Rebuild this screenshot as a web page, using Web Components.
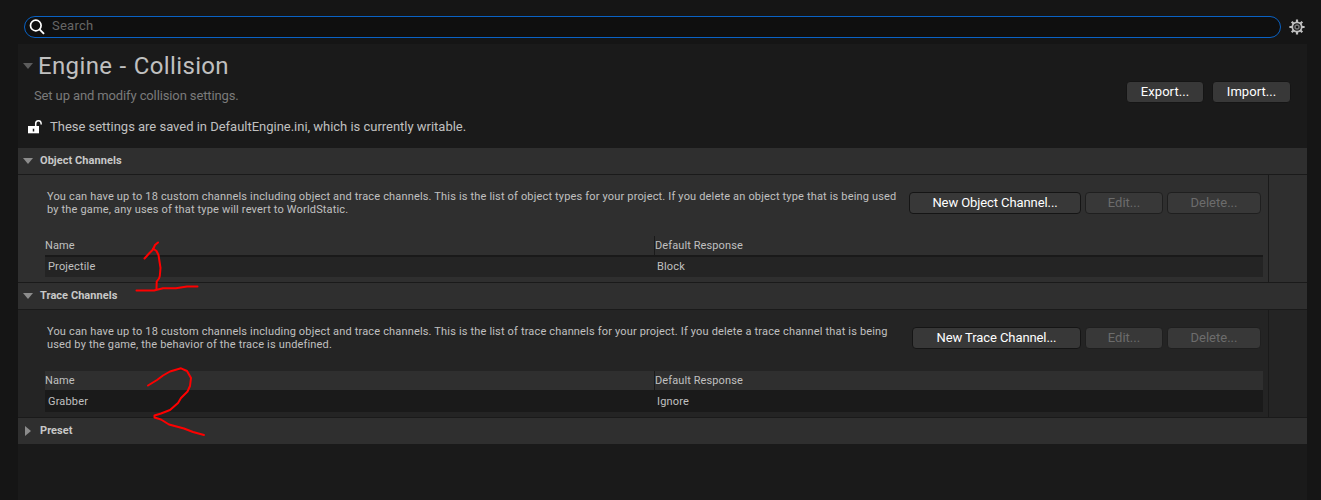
<!DOCTYPE html>
<html lang="en">
<head>
<meta charset="utf-8">
<title>Engine - Collision</title>
<style>
html, body { margin: 0; height: 100%; background: #151515; overflow: hidden; }
body { font-family: Roboto, "Liberation Sans", sans-serif; color: #c0c0c0; }
</style>
</head>
<body>
<settings-page></settings-page>
<script>
const define = (name, html) => {
  const t = document.createElement('template');
  t.innerHTML = html;
  customElements.define(name, class extends HTMLElement {
    constructor() {
      super();
      this.attachShadow({ mode: 'open' }).append(t.content.cloneNode(true));
    }
  });
};

define('search-bar', `
<style>
:host { display: flex; align-items: center; height: 44px; padding: 0 16px 0 24px; box-sizing: border-box; }
.field { flex: 1; height: 22px; margin-top: 10px; margin-right: 8px; box-sizing: border-box; border: 1px solid #0a62c4; border-radius: 11px; background: #0f0f0f; display: flex; align-items: center; }
.field svg { margin-left: 4px; flex: none; }
.field span { font-size: 13px; line-height: 16px; color: #666; margin: -3px 0 0 7px; letter-spacing: .25px; }
.gear { margin-top: 10px; flex: none; }
</style>
<div class="field">
<svg width="16" height="16" viewBox="0 0 16 16" fill="none" stroke="#fff"><circle cx="6.8" cy="6.5" r="5.3" stroke-width="1.7"/><path d="M10.6 10.4L15 14.8" stroke-width="1.9"/></svg>
<span>Search</span>
</div>
<svg class="gear" width="16" height="16" viewBox="0 0 16 16" fill="none" stroke="#c0c0c0">
<circle cx="8" cy="8" r="4.7" stroke-width="1.8"/>
<circle cx="8" cy="8" r="2" stroke-width="1.5" stroke="#777"/>
<path stroke-width="2.2" d="M8 .4V3M8 13v2.6M.4 8H3M13 8h2.6M2.7 2.7l1.8 1.8M11.5 11.5l1.8 1.8M13.3 2.7l-1.8 1.8M4.5 11.5l-1.8 1.8"/></svg>`);

define('ui-button', `
<style>
:host { display: flex; box-sizing: border-box; height: 22px; border: 1px solid #151515; border-radius: 4px; background: #383838; color: #fff; align-items: center; justify-content: center; font-size: 13px; line-height: 16px; white-space: nowrap; letter-spacing: var(--ls, 0px); }
:host([disabled]) { color: #6c6c6c; border-color: #1f1f1f; }
span { margin-top: -1px; }
</style><span><slot></slot></span>`);

define('expand-arrow', `
<style>:host { display: block; width: 10px; height: 10px; } svg { display: block; } :host([closed]) svg { transform: rotate(-90deg); }</style>
<svg width="10" height="10" viewBox="0 0 10 10"><path d="M0 2H10L5 8Z" fill="var(--arrow, #8c8c8c)"/></svg>`);

define('page-header', `
<style>
:host { display: flex; height: 104px; box-sizing: border-box; padding: 0 16px 0 5px; justify-content: space-between; }
.title { display: flex; align-items: center; gap: 5px; height: 44px; --arrow: #5c5c5c; }
h1 { margin: 0; font: 400 24px/30px Roboto, sans-serif; letter-spacing: .36px; word-spacing: .9px; color: #c0c0c0; }
.desc { font-size: 13px; line-height: 16px; color: #7a7a7a; margin-left: 11px; letter-spacing: -.12px; }
.note { display: flex; align-items: center; margin: 14px 0 0 5px; gap: 8px; font-size: 13px; line-height: 18px; letter-spacing: -.018px; }
.buttons { display: flex; gap: 8px; padding-top: 37px; --ls: .05px; }
.buttons ui-button { width: 78px; }
.buttons ui-button:last-child { width: 79px; }
</style>
<div>
<div class="title"><expand-arrow></expand-arrow><h1>Engine - Collision</h1></div>
<div class="desc">Set up and modify collision settings.</div>
<div class="note"><svg width="14" height="14" viewBox="0 0 14 14"><path d="M0 6H11V13.3H0Z" fill="#fff"/><path d="M7.7 6V3.7Q7.7 .8 10.5 .8Q13.2 .8 13.2 4.4" fill="none" stroke="#fff" stroke-width="1.5"/><path d="M5.5 8.7v2.8" stroke="#1a1a1a" stroke-width="1.5"/></svg><span>These settings are saved in DefaultEngine.ini, which is currently writable.</span></div>
</div>
<div class="buttons"><ui-button>Export...</ui-button><ui-button>Import...</ui-button></div>`);

define('section-header', `
<style>
:host { display: flex; align-items: center; height: 26px; padding-left: 5px; gap: 7px; background: #2f2f2f; font-weight: 700; font-size: 11px; line-height: 14px; letter-spacing: .05px; color: #c8c8c8; }
</style><expand-arrow></expand-arrow><span><slot></slot></span>`);
class SectionHeader extends customElements.get('section-header') {
  connectedCallback() {
    if (this.hasAttribute('closed')) this.shadowRoot.querySelector('expand-arrow').setAttribute('closed', '');
  }
}
customElements.define('section-header-toggle', SectionHeader);

define('channel-section', `
<style>
:host { display: grid; grid-template-columns: 1250px 38px; gap: 1px; height: 107px; border-top: 1px solid #1a1a1a; border-bottom: 1px solid #1a1a1a; background: #1a1a1a; }
.main, .side { background: var(--body, #242424); }
.main { padding: 17px 5px 0 27px; box-sizing: border-box; }
.top { display: flex; height: 44px; justify-content: space-between; padding: 0 2px 0 2px; }
.text { font-size: 11px; line-height: 13px; letter-spacing: .168px; white-space: nowrap; margin-top: -2px; }
.actions { display: flex; gap: 4px; }
.edit { width: 78px; } .del { width: 94px; } .new { width: var(--neww, 172px); --ls: -.09px; }
.row { display: grid; grid-template-columns: 609px 1fr; font-size: 11px; letter-spacing: .1px; }
.head { height: 19px; line-height: 19px; background: #2f2f2f; gap: 1px; }
.head > :last-child { box-shadow: -1px 0 #1a1a1a; }
.item { height: 22px; line-height: 24px; background: var(--row, #1a1a1a); box-sizing: border-box; padding-left: 3px; letter-spacing: .16px; }
:host([hover]) .item { box-shadow: inset 0 2px #191919; }
</style>
<div class="main">
<div class="top"><div class="text"><slot name="text"></slot></div><div class="actions"><ui-button class="new"><slot name="new"></slot></ui-button><ui-button class="edit" disabled>Edit...</ui-button><ui-button class="del" disabled>Delete...</ui-button></div></div>
<div class="row head"><span>Name</span><span>Default Response</span></div>
<div class="row item"><slot name="name"></slot><slot name="resp"></slot></div>
</div><div class="side"></div>`);

define('pen-marks', `
<style>:host { position: absolute; left: 0; top: 0; pointer-events: none; } svg { display: block; }</style>
<svg width="1321" height="500" fill="none" stroke="#fe0000" stroke-width="2" stroke-linecap="round" stroke-linejoin="round">
<path d="M144.500 258.500L149 253.500L153 249.500L155 245L158 242.500M153 248.500L156.500 251L158.500 255L160.500 268L159.800 276L159 278.500L156.700 281.500L156.500 289"/>
<path d="M136.500 290.500H154L163 288.300L176 288.300L187 286.500H197.500"/>
<path d="M148 385.500L157 380L163 375.500L170 371.500L181 368.300L187 371L191 378L190 386L187.500 391.500L181 398L178 403L170 410L161 413.500L154.500 415.500V417.500L161 419.500L169 424.500L184 428.500L193 432L204 435"/>
</svg>`);

define('settings-page', `
<style>
:host { display: block; width: 1321px; height: 500px; background: #151515; overflow: hidden; }
.panel { margin: 0 14px 0 18px; height: 456px; background: #1a1a1a; }
.obj { --body: #2f2f2f; --row: #242424; }
.trace { --neww: 169px; }
</style>
<search-bar></search-bar>
<div class="panel">
<page-header></page-header>
<section-header>Object Channels</section-header>
<channel-section class="obj" hover>
<span slot="text">You can have up to 18 custom channels including object and trace channels. This is the list of object types for your project. If you delete an object type that is being used<br>by the game, any uses of that type will revert to WorldStatic.</span>
<span slot="new">New Object Channel...</span><span slot="name">Projectile</span><span slot="resp">Block</span></channel-section>
<section-header>Trace Channels</section-header>
<channel-section class="trace">
<span slot="text">You can have up to 18 custom channels including object and trace channels. This is the list of trace channels for your project. If you delete a trace channel that is being<br>used by the game, the behavior of the trace is undefined.</span>
<span slot="new">New Trace Channel...</span><span slot="name">Grabber</span><span slot="resp">Ignore</span></channel-section>
<section-header-toggle closed>Preset</section-header-toggle>
</div>
<pen-marks></pen-marks>`);
</script>
</body>
</html>
